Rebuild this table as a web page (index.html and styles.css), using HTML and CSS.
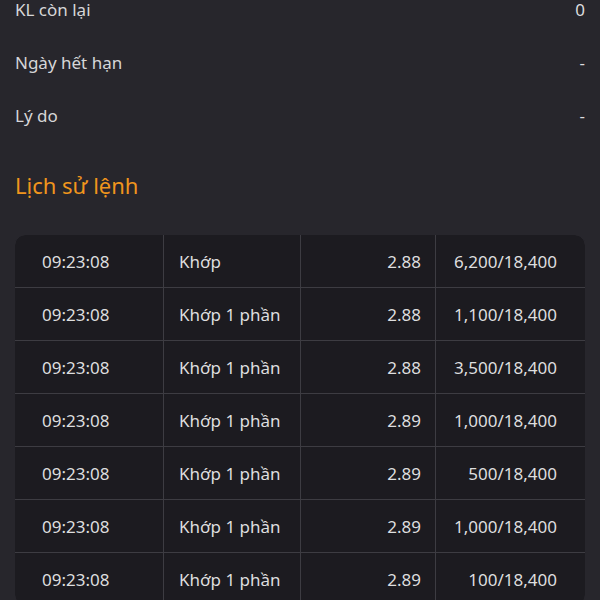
FILE: index.html
```html
<!DOCTYPE html>
<html>
<head>
    <meta charset="UTF-8">
    <title>Chi tiết lệnh</title>
    <link rel="stylesheet" href="styles.css">
</head>
<body>
    <div class="page">
        <div class="info-list">
            <div class="info-row">
                <span class="info-label">KL còn lại</span>
                <span class="info-value">0</span>
            </div>
            <div class="info-row">
                <span class="info-label">Ngày hết hạn</span>
                <span class="info-value">-</span>
            </div>
            <div class="info-row">
                <span class="info-label">Lý do</span>
                <span class="info-value">-</span>
            </div>
        </div>

        <h2 class="section-title">Lịch sử lệnh</h2>

        <div class="history">
            <div class="cell time">09:23:08</div>
            <div class="cell status">Khớp</div>
            <div class="cell price">2.88</div>
            <div class="cell qty">6,200/18,400</div>

            <div class="cell time">09:23:08</div>
            <div class="cell status">Khớp 1 phần</div>
            <div class="cell price">2.88</div>
            <div class="cell qty">1,100/18,400</div>

            <div class="cell time">09:23:08</div>
            <div class="cell status">Khớp 1 phần</div>
            <div class="cell price">2.88</div>
            <div class="cell qty">3,500/18,400</div>

            <div class="cell time">09:23:08</div>
            <div class="cell status">Khớp 1 phần</div>
            <div class="cell price">2.89</div>
            <div class="cell qty">1,000/18,400</div>

            <div class="cell time">09:23:08</div>
            <div class="cell status">Khớp 1 phần</div>
            <div class="cell price">2.89</div>
            <div class="cell qty">500/18,400</div>

            <div class="cell time">09:23:08</div>
            <div class="cell status">Khớp 1 phần</div>
            <div class="cell price">2.89</div>
            <div class="cell qty">1,000/18,400</div>

            <div class="cell time">09:23:08</div>
            <div class="cell status">Khớp 1 phần</div>
            <div class="cell price">2.89</div>
            <div class="cell qty">100/18,400</div>
        </div>
    </div>
</body>
</html>
```

FILE: styles.css
```css
body {
    margin: 0;
    padding: 0;
    background-color: #27262c;
    font-family: "Noto Sans", "Open Sans", sans-serif;
    color: #d6d6d8;
    overflow: hidden;
}

.page {
    padding: 0 15px;
    margin-top: -17px;
}

.info-list {
    display: flex;
    flex-direction: column;
}

.info-row {
    display: flex;
    justify-content: space-between;
    align-items: center;
    height: 53px;
    font-size: 17px;
}

.info-value {
    color: #dcdcde;
}

.section-title {
    margin: 28px 0 35px;
    font-size: 22px;
    font-weight: normal;
    line-height: 30px;
    color: #f0951d;
}

.history {
    display: grid;
    grid-template-columns: 148px 136px 134px 149px;
    grid-auto-rows: 52px;
    gap: 1px;
    background-color: #3d3c42;
    border-radius: 10px;
    overflow: hidden;
}

.cell {
    display: flex;
    align-items: center;
    background-color: #1c1b20;
    font-size: 17px;
    color: #dededf;
}

.time {
    padding-left: 27px;
}

.status {
    padding-left: 15px;
}

.price {
    justify-content: flex-end;
    padding-right: 14px;
}

.qty {
    justify-content: flex-end;
    padding-right: 28px;
}
```
